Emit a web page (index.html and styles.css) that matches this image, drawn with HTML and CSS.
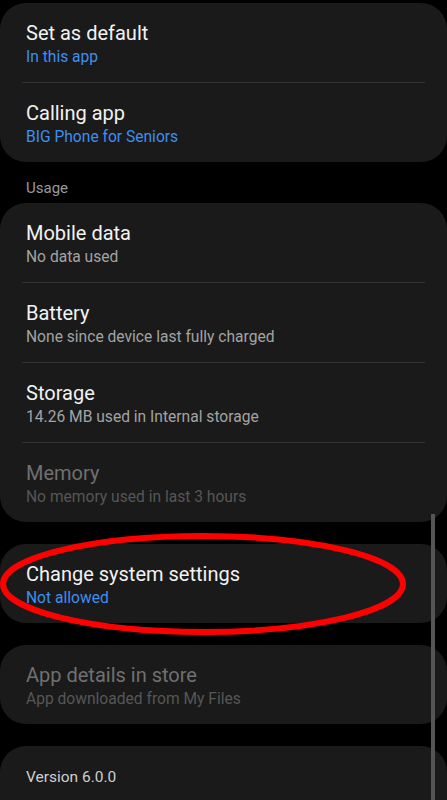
FILE: index.html
```html
<!DOCTYPE html>
<html>
<head>
<meta charset="utf-8">
<link rel="stylesheet" href="styles.css">
</head>
<body>
<div class="screen">
  <div class="card first">
    <div class="row"><div class="title">Set as default</div><div class="sub blue">In this app</div></div>
    <div class="row"><div class="title">Calling app</div><div class="sub blue">BIG Phone for Seniors</div></div>
  </div>
  <div class="section">Usage</div>
  <div class="card">
    <div class="row"><div class="title">Mobile data</div><div class="sub">No data used</div></div>
    <div class="row"><div class="title">Battery</div><div class="sub">None since device last fully charged</div></div>
    <div class="row"><div class="title">Storage</div><div class="sub">14.26 MB used in Internal storage</div></div>
    <div class="row dim"><div class="title">Memory</div><div class="sub">No memory used in last 3 hours</div></div>
  </div>
  <div class="card spaced">
    <div class="row"><div class="title">Change system settings</div><div class="sub blue">Not allowed</div></div>
  </div>
  <div class="card spaced">
    <div class="row dim"><div class="title">App details in store</div><div class="sub">App downloaded from My Files</div></div>
  </div>
  <div class="card spaced last">
    <div class="version">Version 6.0.0</div>
  </div>
  <div class="scrollbar"></div>
  <svg class="circle" width="410" height="106" viewBox="0 0 410 106">
    <ellipse cx="203" cy="53" rx="200" ry="48" fill="none" stroke="#ff0000" stroke-width="6"/>
  </svg>
</div>
</body>
</html>
```
FILE: styles.css
```css
html, body {
  margin: 0;
  padding: 0;
  background: #000;
}
body {
  font-family: Roboto, "Noto Sans", sans-serif;
  overflow: hidden;
}
.screen {
  position: relative;
  width: 447px;
  height: 800px;
  overflow: hidden;
}
.card {
  background: #1a1a1a;
  border-radius: 26px;
}
.card.first {
  margin-top: 3px;
}
.card.spaced {
  margin-top: 22px;
}
.row {
  padding: 19px 26px 12px;
  position: relative;
}
.row + .row::before {
  content: "";
  position: absolute;
  top: -1px;
  left: 22px;
  right: 22px;
  height: 1px;
  background: #333;
}
.row + .row {
  margin-top: 1px;
}
.title {
  font-size: 20px;
  line-height: 22px;
  color: #f2f2f2;
}
.sub {
  font-size: 15.6px;
  line-height: 26px;
  color: #a3a3a3;
}
.sub.blue {
  color: #3f8ef0;
}
.dim .title {
  color: #707070;
}
.dim .sub {
  color: #565656;
}
.section {
  padding: 16px 26px 5px;
  font-size: 15px;
  line-height: 20px;
  color: #9a9a9a;
}
.version {
  padding: 20px 26px 40px;
  font-size: 15.5px;
  line-height: 22px;
  color: #cfcfcf;
}
.scrollbar {
  position: absolute;
  left: 431px;
  top: 514px;
  width: 4px;
  height: 290px;
  background: #555;
}
.circle {
  position: absolute;
  left: 0;
  top: 531px;
}
```
